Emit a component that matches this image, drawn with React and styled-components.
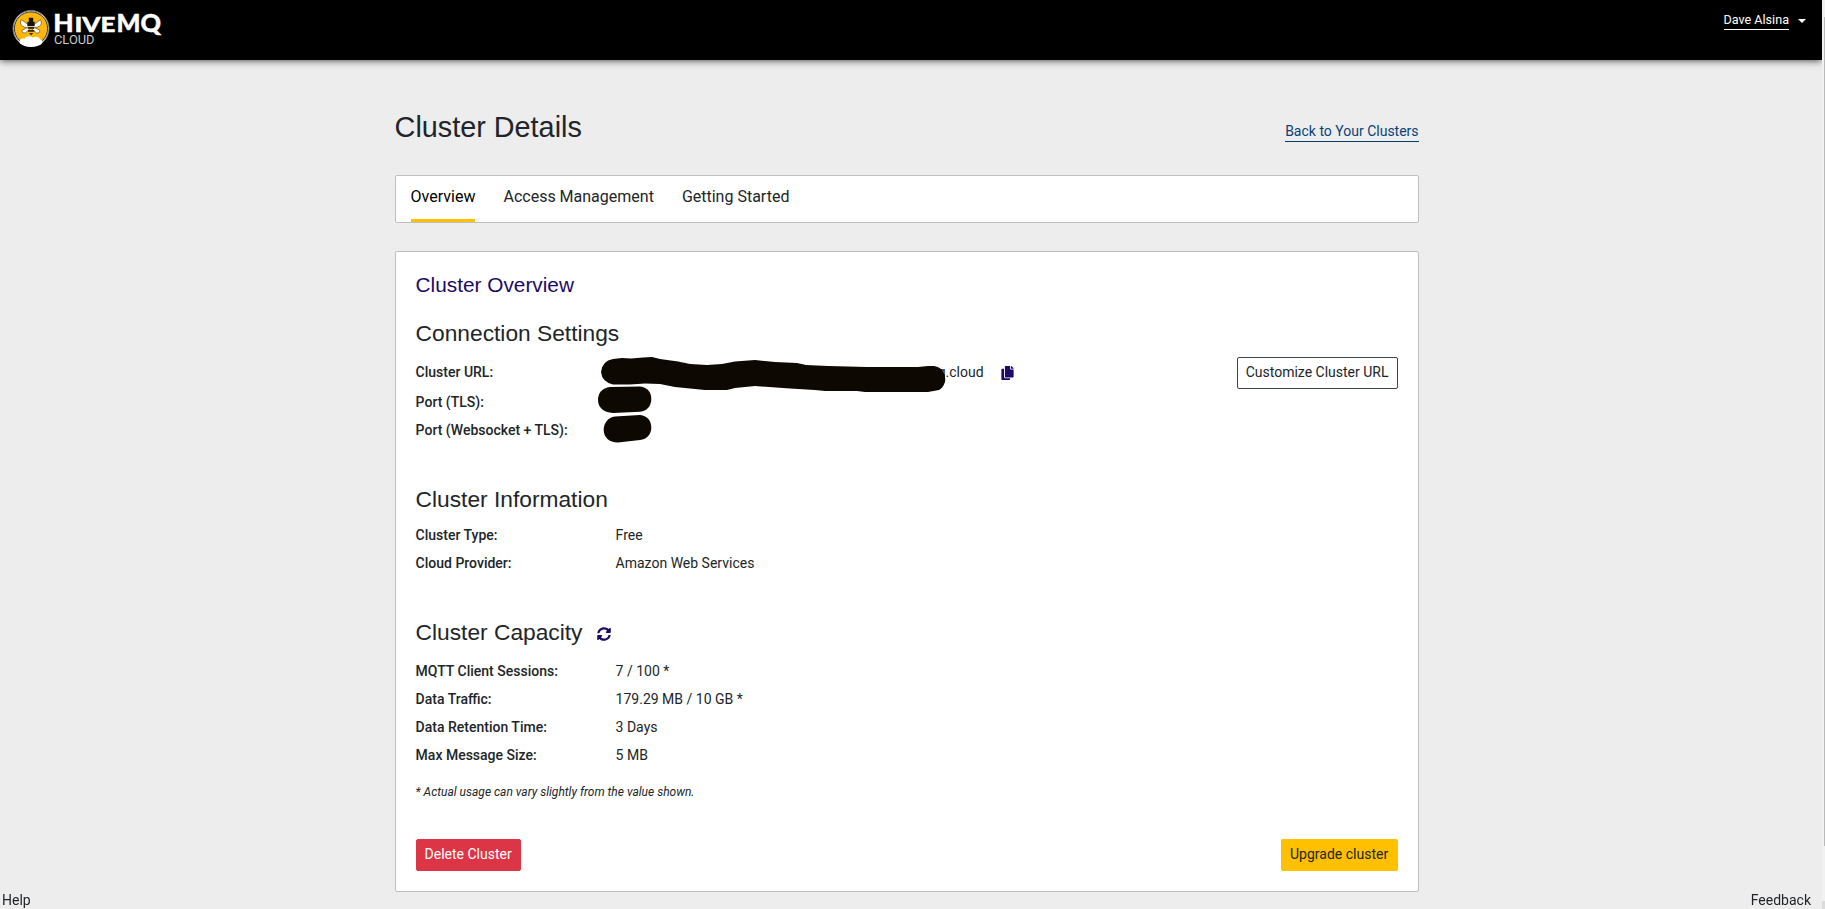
import React from "react";
import styled, { createGlobalStyle } from "styled-components";
import { FaCopy, FaSyncAlt } from "react-icons/fa";

const GlobalStyle = createGlobalStyle`
  *, *::before, *::after { box-sizing: border-box; }
  html, body { margin: 0; height: 100%; overflow: hidden; }
  body {
    background: #ededed;
    color: #212529;
    font-family: Roboto, "Liberation Sans", sans-serif;
    font-size: 14px;
  }
  h1, h2, h3, p { margin: 0; }
`;

const Shell = styled.div`
  display: flex;
  height: 100vh;
  overflow: hidden;
`;

const Page = styled.div`
  flex: 1;
  min-width: 0;
`;

const Navbar = styled.header`
  display: flex;
  justify-content: space-between;
  align-items: flex-start;
  height: 60px;
  padding: 8px 16px 0 12px;
  background: #000;
  box-shadow: 0 1px 7px rgba(0, 0, 0, 0.65);
`;

const UserMenu = styled.div`
  display: flex;
  align-items: center;
  gap: 9px;
  height: 22px;
`;

const UserName = styled.a`
  height: 22px;
  border-bottom: 1px solid #fff;
  color: #fff;
  font-size: 12.6px;
  line-height: 23px;
  white-space: nowrap;
`;

const Caret = styled.span`
  margin-top: 3px;
  border: 4px solid transparent;
  border-top-color: #fff;
  border-bottom: 0;
`;

const Main = styled.main`
  width: 1024px;
  margin: 0 0 0 394.6px;
  padding-top: 50px;
`;

const TitleRow = styled.div`
  display: flex;
  justify-content: space-between;
  align-items: flex-start;
  height: 65px;
`;

const Title = styled.h1`
  font: 400 28.8px/34px "Liberation Sans", Arial, sans-serif;
`;

const BackLink = styled.a`
  height: 22px;
  margin-top: 10px;
  border-bottom: 1px solid #003e6b;
  color: #0a4275;
  font-size: 14px;
  line-height: 23px;
`;

const Panel = styled.section`
  border: 1px solid #bfbfbf;
  border-radius: 2px;
  background: #fff;
`;

const TabBar = styled(Panel)`
  display: flex;
  gap: 28px;
  height: 48px;
  padding: 0 15px;
`;

const Tab = styled.a`
  height: 46px;
  border-bottom: 3px solid ${(p) => (p.$active ? "#ffc000" : "transparent")};
  color: ${(p) => (p.$active ? "#000" : "#212529")};
  font-size: 16px;
  line-height: 42px;
`;

const Card = styled(Panel)`
  height: 641px;
  margin-top: 28px;
  padding: 20px 20px 0;
`;

const CardTitle = styled.h2`
  color: #1e0a64;
  font: 400 20.8px/25px "Liberation Sans", Arial, sans-serif;
  margin-bottom: 23px;
`;

const Section = styled.section`
  position: relative;
  margin-bottom: ${(p) => p.$after ?? 42}px;
`;

const SectionTitle = styled.h3`
  display: flex;
  align-items: center;
  gap: 14px;
  margin-bottom: ${(p) => p.$gap ?? 11}px;
  font: 400 22.75px/27px "Liberation Sans", Arial, sans-serif;

  svg { width: 14px; height: 14px; margin-top: 3px; color: #1e0a64; }
`;

const Row = styled.div`
  display: flex;
  align-items: flex-start;
  height: ${(p) => p.$height ?? 28}px;
  line-height: 28px;
`;

const Label = styled.span`
  width: 200px;
  font-weight: 500;
`;

const Value = styled.span`
  white-space: nowrap;
`;

const UrlValue = styled.span`
  width: 368px;
  text-align: right;
`;

const CopyButton = styled.span`
  display: flex;
  margin: 8px auto 0 17px;
  color: #1e0a64;

  svg { width: 13px; height: 14px; }
`;

const Button = styled.button`
  width: ${(p) => p.$width}px;
  height: 32px;
  padding: 0 7px 2px;
  border: 1px solid ${(p) => p.$border};
  border-radius: 2px;
  background: ${(p) => p.$fill};
  color: ${(p) => p.$ink};
  font: 400 14px/28px Roboto, sans-serif;
  white-space: nowrap;
`;

const UrlButton = styled(Button)`
  margin: -1px 0;
`;

const Redaction = styled.svg`
  position: absolute;
  left: 180.4px;
  top: 30px;
  overflow: visible;
  fill: #0e0803;
`;

const Note = styled.p`
  margin-top: 14px;
  font-size: 12px;
  font-style: italic;
  line-height: 18px;
`;

const Actions = styled.div`
  display: flex;
  justify-content: space-between;
`;

const CornerLink = styled.a`
  position: fixed;
  bottom: 0;
  ${(p) => p.$side}: ${(p) => p.$offset}px;
  line-height: 17px;
  font-size: 14px;
`;

const ScrollTrack = styled.div`
  display: flex;
  flex-direction: column;
  align-items: flex-end;
  width: 3px;
  padding-top: 17px;
  background: #f1f1f1;
`;

const ScrollThumb = styled.div`
  width: 1px;
  height: 829px;
  background: #b9b9b9;
`;

const ScrollCorner = styled.div`
  width: 3px;
  height: 8px;
  margin-top: auto;
  background: #dcdcdc;
`;

function Logo() {
  return (
    <svg width="152" height="42" viewBox="12 8 152 42" role="img" aria-label="HiveMQ Cloud">
      <circle cx="31" cy="28.5" r="18" fill="#ececec" stroke="#777" strokeWidth="1" />
      <circle cx="31" cy="28.5" r="16.6" fill="#ffb80a" stroke="#222" strokeWidth="0.9" />
      <path d="M29.3 25.5 L21.3 19.5 L20.4 23 Q21 27 27.3 27.6 L21.8 30.5 Q21.8 33.5 25.3 33 L30.8 28 L36.6 33 Q40 33.5 40 30.5 L34.6 27.6 Q41 27 41.4 23 L40.6 19.5 L32.8 25.5Z" fill="#fff" stroke="#4a3a12" strokeWidth="0.6" />
      <path d="M28.8 17.8h4.4v4h1.4v4.4h-7.2v-4.4h1.4z" fill="#16130b" />
      <rect x="27.7" y="27" width="6.6" height="1.9" fill="#3b2b08" />
      <rect x="28" y="30" width="6.2" height="1.8" fill="#3b2b08" />
      <path d="M29 33h4.2L31.1 35.6z" fill="#3b2b08" />
      <path d="M20 43.5 C18.5 40 22 37.5 24.5 39 C26 35.8 31 35.5 33 37.8 C36 35.5 40 37 40 39.5 C43 39.7 43 43 41 44.5 C35 48 26 48 20 43.5Z" fill="#fff" />
      <g fill="#fff" stroke="#fff" strokeWidth="0.4" fontFamily="Lato, sans-serif" fontWeight="900">
        <text x="53.3" y="32" fontSize="25" textLength="20.5" lengthAdjust="spacingAndGlyphs">H</text>
        <text x="74.5" y="32" fontSize="21" textLength="41" lengthAdjust="spacingAndGlyphs">IVE</text>
        <text x="116.5" y="32" fontSize="25" textLength="44.5" lengthAdjust="spacingAndGlyphs">MQ</text>
      </g>
      <text x="54" y="44" fill="#c9c9c9" fontFamily="Roboto, sans-serif" fontSize="12.6" textLength="40.5" lengthAdjust="spacingAndGlyphs">CLOUD</text>
    </svg>
  );
}

function Marks() {
  return (
    <Redaction width="350" height="90" viewBox="596 350 350 90" aria-hidden="true">
      <path d="M613 359 L622 358 L631 358.5 L643 357.6 L652 357 L660 359 L678 361.5 L690 364 L707 365 L722 364 L735 361.5 L755 360 L775 362 L797 363 L806 365 L828 366 L867 367 L918 367 L928 366 L934 366 Q940 367 943 371 Q946 376 945 382 Q943 388 939 390 L928 392 L865 392 L857 391 L825 391 L815 390 L790 388.5 L755 386 L735 388 L727 390 L705 390 L690 388.5 L675 387 L660 384 L645 383.5 L630 384.5 L613 384.5 Q602 382 601 372 Q602 361 613 359Z" />
      <path d="M610 387 L640 386.6 C648 387.5 651.3 393 651.3 399 C651.3 406 647 411 640 411.7 L613 413 C603 412.5 598 407 598 400 C598 393 602 388 610 387Z" />
      <path d="M615 416.5 L640 415 C648 416 651.3 421 651.3 427.5 C651.3 434 647 439.5 640 440 L618 442.5 C609 442.5 603.7 437 603.7 430 C603.7 423 608 417.5 615 416.5Z" />
    </Redaction>
  );
}

function Detail({ label, children }) {
  return (
    <Row>
      <Label>{label}</Label>
      <Value>{children}</Value>
    </Row>
  );
}

export default function App() {
  return (
    <>
      <GlobalStyle />
      <Shell>
        <Page>
          <Navbar>
            <Logo />
            <UserMenu>
              <UserName>Dave Alsina</UserName>
              <Caret />
            </UserMenu>
          </Navbar>
          <Main>
            <TitleRow>
              <Title>Cluster Details</Title>
              <BackLink>Back to Your Clusters</BackLink>
            </TitleRow>
            <TabBar>
              <Tab $active>Overview</Tab>
              <Tab>Access Management</Tab>
              <Tab>Getting Started</Tab>
            </TabBar>
            <Card>
              <CardTitle>Cluster Overview</CardTitle>
              <Section>
                <SectionTitle>Connection Settings</SectionTitle>
                <Row $height={30}>
                  <Label>Cluster URL:</Label>
                  <UrlValue>g.cloud</UrlValue>
                  <CopyButton><FaCopy /></CopyButton>
                  <UrlButton $width={161} $border="#3d4450" $fill="#fff" $ink="#212529">
                    Customize Cluster URL
                  </UrlButton>
                </Row>
                <Detail label="Port (TLS):" />
                <Detail label="Port (Websocket + TLS):" />
                <Marks />
              </Section>
              <Section>
                <SectionTitle $gap={8}>Cluster Information</SectionTitle>
                <Detail label="Cluster Type:">Free</Detail>
                <Detail label="Cloud Provider:">Amazon Web Services</Detail>
              </Section>
              <Section $after={38}>
                <SectionTitle>
                  Cluster Capacity <FaSyncAlt />
                </SectionTitle>
                <Detail label="MQTT Client Sessions:">7 / 100 *</Detail>
                <Detail label="Data Traffic:">179.29 MB / 10 GB *</Detail>
                <Detail label="Data Retention Time:">3 Days</Detail>
                <Detail label="Max Message Size:">5 MB</Detail>
                <Note>* Actual usage can vary slightly from the value shown.</Note>
              </Section>
              <Actions>
                <Button $width={105} $border="#dc3545" $fill="#dc3545" $ink="#fff">Delete Cluster</Button>
                <Button $width={117} $border="#ffc000" $fill="#ffc000" $ink="#212529">Upgrade cluster</Button>
              </Actions>
            </Card>
          </Main>
        </Page>
        <ScrollTrack>
          <ScrollThumb />
          <ScrollCorner />
        </ScrollTrack>
      </Shell>
      <CornerLink $side="left" $offset={2}>Help</CornerLink>
      <CornerLink $side="right" $offset={14}>Feedback</CornerLink>
    </>
  );
}
